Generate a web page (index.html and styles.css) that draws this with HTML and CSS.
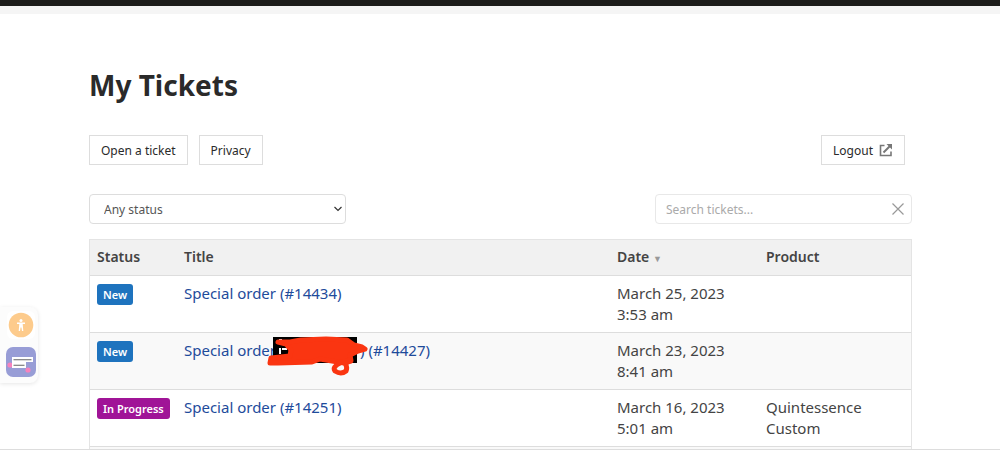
FILE: index.html
```html
<!DOCTYPE html>
<html lang="en">
<head>
  <meta charset="UTF-8">
  <meta name="viewport" content="width=device-width, initial-scale=1.0">
  <title>My Tickets</title>
  <link rel="stylesheet" href="styles.css">
</head>
<body>
  <header class="top-bar"></header>

  <main class="content">
    <h1>My Tickets</h1>

    <div class="actions">
      <button class="btn" type="button">Open a ticket</button>
      <button class="btn" type="button">Privacy</button>
      <button class="btn btn-logout" type="button">
        Logout
        <svg class="logout-icon" viewBox="0 0 14 14" aria-hidden="true">
          <path d="M5.500 2.500H1.500v10h10.500V8.500" fill="none" stroke="currentColor" stroke-width="1.600"/>
          <path d="M4.500 9.500 11 3" fill="none" stroke="currentColor" stroke-width="2"/>
          <path d="M7.500 1H13v5.500z" fill="currentColor"/>
        </svg>
      </button>
    </div>

    <div class="filters">
      <div class="select-wrap">
        <select class="field" aria-label="Status">
          <option>Any status</option>
        </select>
        <svg class="chevron" viewBox="0 0 8 6" aria-hidden="true">
          <path d="M.5 1 4 4.500 7.500 1" fill="none" stroke="currentColor" stroke-width="1.200"/>
        </svg>
      </div>
      <div class="search-wrap">
        <input class="field" type="text" placeholder="Search tickets..." aria-label="Search tickets">
        <button class="clear" type="button" aria-label="Clear search">
          <svg viewBox="0 0 12 12" aria-hidden="true">
            <path d="M.5.5l11 11M11.500.5l-11 11" fill="none" stroke="currentColor" stroke-width="1.200"/>
          </svg>
        </button>
      </div>
    </div>

    <table class="tickets">
      <colgroup>
        <col class="col-status">
        <col>
        <col class="col-date">
        <col class="col-product">
      </colgroup>
      <thead>
        <tr>
          <th>Status</th>
          <th>Title</th>
          <th>Date <span class="sort">▼</span></th>
          <th>Product</th>
        </tr>
      </thead>
      <tbody>
        <tr>
          <td><span class="badge new">New</span></td>
          <td><a href="#">Special order (#14434)</a></td>
          <td>March 25, 2023<br>3:53 am</td>
          <td></td>
        </tr>
        <tr>
          <td><span class="badge new">New</span></td>
          <td>
            <a class="redacted" href="#"><span>Special order</span><span class="hidden-name"><svg class="scribble" viewBox="0 0 104 42" aria-hidden="true">
                <path d="M7 2h84v26H7z" fill="#000"/>
                <path d="M13 13h2v6h-2zM16 13h5v2h-5zM13 4h3v3h-3z" fill="#fff"/>
                <path d="M12 7 24 7 35 5 60 4 81 5 88 10 96 12 99 14 92 16 84 20 85 26 78 28 54 24 46 27 12 28 4 28 5 23 24 21 25 15 20 9z" fill="#fa3511" stroke="#fa3511" stroke-width="5" stroke-linejoin="round"/>
                <path d="M83 25 74 28Q66 32 69 36Q75 40 80 36Q82 31 78 27" fill="none" stroke="#fa3511" stroke-width="5" stroke-linecap="round"/>
              </svg></span><span>) (#14427)</span></a>
          </td>
          <td>March 23, 2023<br>8:41 am</td>
          <td></td>
        </tr>
        <tr>
          <td><span class="badge progress">In Progress</span></td>
          <td><a href="#">Special order (#14251)</a></td>
          <td>March 16, 2023<br>5:01 am</td>
          <td>Quintessence Custom</td>
        </tr>
        <tr>
          <td></td>
          <td></td>
          <td></td>
          <td></td>
        </tr>
      </tbody>
    </table>
  </main>

  <!-- floating accessibility / chat buttons -->
  <aside class="widgets">
    <button class="widget" type="button" aria-label="Accessibility">
      <svg viewBox="0 0 30 30" aria-hidden="true">
        <rect x="1" y="1" width="28" height="28" rx="6" fill="#fff"/>
        <circle cx="15" cy="15" r="12.300" fill="#fdcb8c"/>
        <circle cx="15" cy="10.500" r="1.500" fill="#fff"/>
        <path d="M11 12.500h8v1.600h-2.300l.6 6.900h-1.300l-.6-3.500h-.8L14 21h-1.300l.6-6.900H11z" fill="#fff"/>
      </svg>
    </button>
    <button class="widget" type="button" aria-label="Chat">
      <svg viewBox="0 0 30 30" aria-hidden="true">
        <rect width="30" height="30" rx="7" fill="#989dd6"/>
        <circle cx="4" cy="18" r="2.600" fill="#f783bd"/>
        <circle cx="22" cy="23" r="2.600" fill="#f783bd"/>
        <path d="M6 10h21v5h-7v6H6z" fill="#fff"/>
        <path d="M7.500 12.800h18M7.500 18.300h11" stroke="#666" stroke-width="1.100"/>
      </svg>
    </button>
  </aside>

  <div class="bottom-line"></div>
</body>
</html>
```
FILE: styles.css
```css
* {
  box-sizing: border-box;
}

body {
  margin: 0;
  height: 100vh;
  overflow: hidden;
  background: #fff;
  color: #444;
  font-family: "Noto Sans", sans-serif;
  font-size: 15px;
  line-height: 21px;
}

button,
input,
select {
  font-family: inherit;
  margin: 0;
}

.top-bar {
  height: 14px;
  background: #f5f5f5;
  border-top: 6px solid #1c1c1a;
}

.content {
  padding: 50px 88px 0 89px;
}

h1 {
  margin: 0 0 29px;
  color: #2a2a2a;
  font-size: 28px;
  font-weight: 700;
  line-height: 42px;
}

.actions {
  display: flex;
  gap: 11px;
  margin-bottom: 29px;
  padding-right: 7px;
}

.btn {
  display: flex;
  align-items: center;
  height: 30px;
  padding: 0 11px;
  background: #fff;
  border: 1px solid #ddd;
  color: #2a2a2a;
  font-size: 12px;
}

.btn-logout {
  gap: 6px;
  margin-left: auto;
}

.logout-icon {
  width: 14px;
  height: 14px;
  color: #777;
}

.filters {
  display: flex;
  justify-content: space-between;
  margin-bottom: 15px;
}

.select-wrap,
.search-wrap {
  position: relative;
  width: 257px;
}

.field {
  display: block;
  width: 100%;
  height: 30px;
  background: #fff;
  border: 1px solid #ddd;
  border-radius: 4px;
  color: #555;
  font-size: 12px;
}

select.field {
  appearance: none;
  padding: 0 14px;
}

input.field {
  padding: 0 30px 0 10px;
  border-color: #e8e8e8;
}

.field::placeholder {
  color: #aaa;
}

.chevron {
  position: absolute;
  top: 12px;
  right: 4px;
  width: 8px;
  height: 6px;
  color: #333;
}

.clear {
  position: absolute;
  top: 9px;
  right: 8px;
  width: 12px;
  height: 12px;
  padding: 0;
  background: none;
  border: 0;
  color: #999;
}

.clear svg,
.widget svg {
  display: block;
}

.tickets {
  width: 100%;
  table-layout: fixed;
  border-collapse: separate;
  border-spacing: 0;
  border: 1px solid #e4e4e4;
}

.col-status {
  width: 87px;
}

.col-date {
  width: 149px;
}

.col-product {
  width: 152px;
}

th,
td {
  padding: 7px;
  border-bottom: 1px solid #ddd;
  text-align: left;
  vertical-align: top;
}

th {
  padding: 7px 7px 6px;
  background: #f1f1f1;
  font-size: 14px;
  font-weight: 600;
  line-height: 20px;
}

td:last-child {
  padding-right: 40px;
}

tbody tr:nth-child(even) {
  background: #f9f9f9;
}

.sort {
  color: #999;
  font-size: 9px;
}

.tickets a {
  color: #1e4b9b;
  text-decoration: none;
}

.badge {
  display: inline-block;
  padding: 0 6px;
  border-radius: 3px;
  color: #fff;
  font-size: 11px;
  font-weight: 600;
  white-space: nowrap;
}

.new {
  background: #1e73be;
}

.progress {
  background: #a01497;
}

.redacted {
  display: flex;
}

.hidden-name {
  position: relative;
  width: 84px;
}

.scribble {
  position: absolute;
  top: -5px;
  left: -10px;
  width: 104px;
  height: 42px;
}

.widgets {
  position: fixed;
  top: 307px;
  left: 0;
  display: flex;
  flex-direction: column;
  gap: 7px;
  padding: 3px 2px 6px 6px;
  background: #fcfcfc;
  border-radius: 0 8px 8px 0;
  box-shadow: 0 1px 4px rgba(0, 0, 0, 0.1);
}

.widget {
  width: 30px;
  height: 30px;
  padding: 0;
  background: none;
  border: 0;
}

.bottom-line {
  position: fixed;
  right: 0;
  bottom: 0;
  left: 0;
  height: 1px;
  background: #ddd;
}
```
